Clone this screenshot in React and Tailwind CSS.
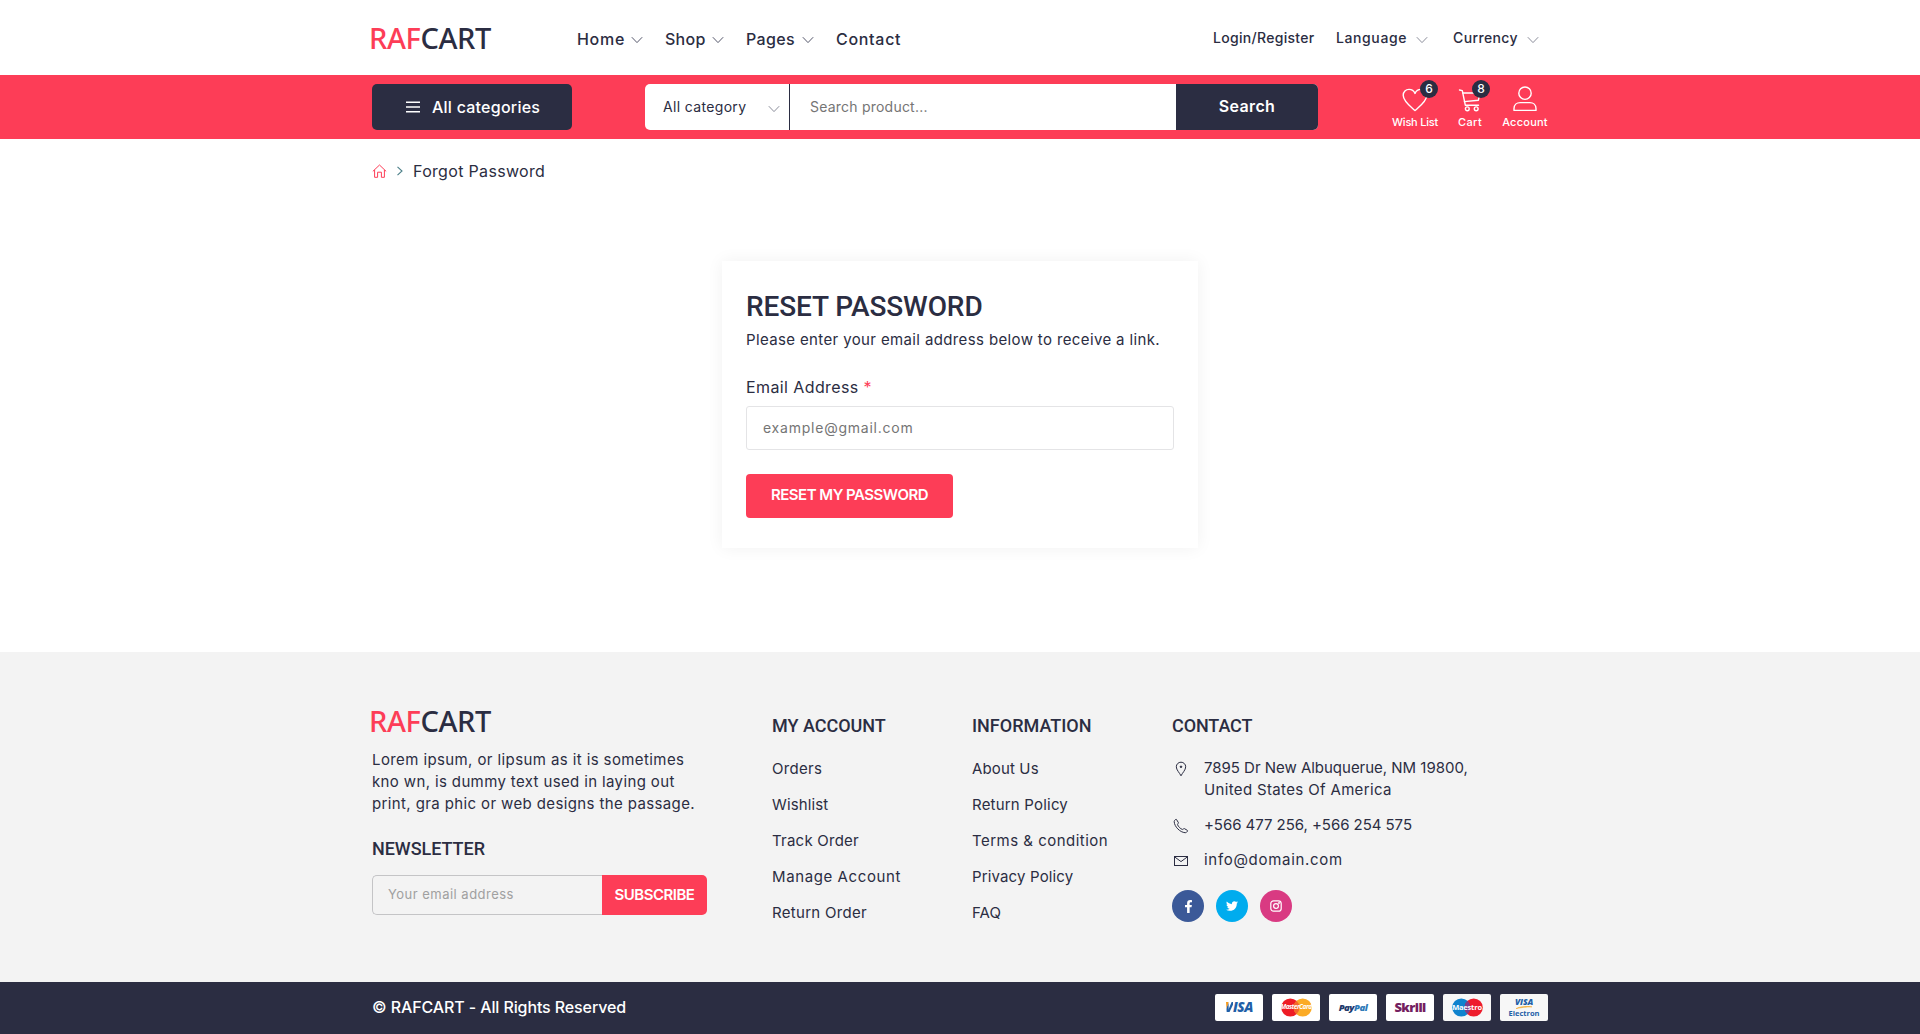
import React from "react";
import { FaFacebookF, FaTwitter } from "react-icons/fa";

function Chevron({ className = "" }) {
  return (
    <svg width="12" height="8" viewBox="0 0 12 8" fill="none" stroke="currentColor" strokeWidth="1" className={className}>
      <path d="M0.8 1.2L6 6.6L11.2 1.2" />
    </svg>
  );
}

function Logo() {
  return (
    <div className="-ml-[3px] h-10 w-[126px] whitespace-nowrap font-['Noto_Sans','Open_Sans',sans-serif] text-[29px] leading-10 font-medium tracking-[-0.4px] text-[#2b2d42]">
      <span className="text-[#fd3d57]">RAF</span>CART
    </div>
  );
}

function HeartIcon() {
  return (
    <svg width="26" height="24" viewBox="0 0 26 24" fill="none" stroke="currentColor" strokeWidth="1.4" strokeLinejoin="round">
      <path d="M13 22.5C9 19 1.2 13.5 1.2 7.3C1.2 3.8 3.8 1.4 7 1.4C9.6 1.4 12 3 13 5.4C14 3 16.4 1.4 19 1.4C22.2 1.4 24.8 3.8 24.8 7.3C24.8 13.5 17 19 13 22.5Z" />
    </svg>
  );
}

function CartIcon() {
  return (
    <svg width="24" height="24" viewBox="0 0 24 24" fill="none" stroke="currentColor" strokeWidth="1.4" strokeLinecap="round" strokeLinejoin="round">
      <path d="M1.5 2L4.3 2.6L7.3 17.2H20.5" />
      <path d="M4.8 5H22L20.4 12.2L6.4 13.6" />
      <circle cx="9.3" cy="20.8" r="1.9" />
      <circle cx="18.2" cy="20.8" r="1.9" />
    </svg>
  );
}

function AccountIcon() {
  return (
    <svg width="24" height="26" viewBox="0 0 24 26" fill="none" stroke="currentColor" strokeWidth="1.4" strokeLinejoin="round">
      <circle cx="12" cy="7.2" r="6.2" />
      <path d="M1 24.4V22.6C1 19 3.6 16.6 7.2 16.6H16.8C20.4 16.6 23 19 23 22.6V24.4Z" />
    </svg>
  );
}

function HomeIcon() {
  return (
    <svg width="15" height="14" viewBox="0 0 15 14" fill="none" stroke="currentColor" strokeWidth="1" strokeLinejoin="round">
      <path d="M0.8 7.4L7.5 1L14.2 7.4" />
      <path d="M2.6 6V13.3H5.6V8.2H9.4V13.3H12.4V6" />
    </svg>
  );
}

function PinIcon() {
  return (
    <svg width="12" height="16" viewBox="0 0 12 16" fill="none" stroke="currentColor" strokeWidth="1">
      <path d="M6 14.8C4.6 11.9 1.3 8.9 1.3 5.8C1.3 3.2 3.4 1.2 6 1.2C8.6 1.2 10.7 3.2 10.7 5.8C10.7 8.9 7.4 11.9 6 14.8Z" />
      <circle cx="6" cy="5.8" r="0.8" fill="currentColor" />
    </svg>
  );
}

function PhoneIcon() {
  return (
    <svg width="16" height="16" viewBox="0 0 16 16" fill="none" stroke="currentColor" strokeWidth="1" strokeLinejoin="round">
      <path d="M3.4 1.4L5.4 4.6C5.7 5.1 4.3 6.1 4.6 6.8C5.5 8.8 7.2 10.5 9.2 11.4C9.9 11.7 10.8 10.3 11.4 10.6L14.4 12.4C15.2 13 13.4 14.8 12.2 14.7C6.8 14.3 1.5 8.6 1.2 3.8C1.1 2.4 2.9 0.9 3.4 1.4Z" />
    </svg>
  );
}

function MailIcon() {
  return (
    <svg width="16" height="12" viewBox="0 0 16 12" fill="none" stroke="currentColor" strokeWidth="1">
      <rect x="1.5" y="1.5" width="13" height="9" />
      <path d="M1.5 1.8L8 6.6L14.5 1.8" />
    </svg>
  );
}

function InstagramIcon() {
  return (
    <svg width="12" height="12" viewBox="0 0 12 12" fill="none" stroke="currentColor" strokeWidth="1.2">
      <rect x="0.8" y="0.8" width="10.4" height="10.4" rx="2.8" />
      <circle cx="6" cy="6" r="2.4" />
      <circle cx="9" cy="3" r="0.4" />
    </svg>
  );
}

const navItems = [
  { label: "Home", box: "w-[54px]", track: "tracking-[0.7px]", caret: true, gap: "mr-[22px]" },
  { label: "Shop", box: "w-[47px]", track: "tracking-[0.25px]", caret: true, gap: "mr-[22px]" },
  { label: "Pages", box: "w-[56px]", track: "tracking-[0.35px]", caret: true, gap: "mr-[22px]" },
  { label: "Contact", box: "w-[66px]", track: "tracking-[0.7px]", caret: false, gap: "" },
];

const accountLinks = [
  ["Orders", "tracking-[0.3px]"],
  ["Wishlist", "tracking-[0.12px]"],
  ["Track Order", "tracking-[0.23px]"],
  ["Manage Account", "tracking-[0.6px]"],
  ["Return Order", "tracking-[0.3px]"],
];

const infoLinks = [
  ["About Us", "tracking-[0.14px]"],
  ["Return Policy", "tracking-[0.2px]"],
  ["Terms & condition", "tracking-[0.48px]"],
  ["Privacy Policy", "tracking-[0.15px]"],
  ["FAQ", "tracking-[0.06px]"],
];

function Header() {
  return (
    <header className="mx-auto flex h-[75px] w-[1176px] items-center">
      <Logo />
      <nav className="ml-[82px] flex pt-[3px] text-base leading-6 font-medium">
        {navItems.map((n) => (
          <a key={n.label} className={`flex items-center whitespace-nowrap ${n.gap}`}>
            <span className={`${n.box} ${n.track}`}>{n.label}</span>
            {n.caret && <Chevron className="mt-px text-[#55576b]" />}
          </a>
        ))}
      </nav>
      <div className="ml-auto flex items-center pt-px pr-[9px] text-sm leading-6 font-medium whitespace-nowrap">
        <span className="w-[123px] tracking-[0.3px]">Login/Register</span>
        <span className="w-[80px] tracking-[0.6px]">Language</span>
        <Chevron className="mt-1 mr-[25px] text-[#8b8d9a]" />
        <span className="w-[74px] tracking-[0.38px]">Currency</span>
        <Chevron className="mt-1 text-[#8b8d9a]" />
      </div>
    </header>
  );
}

function Action({ icon, label, width, track, badge, badgePos }) {
  return (
    <a className={`relative flex h-16 flex-col items-center ${width}`}>
      <div className="mt-[11px] flex h-[26px] items-end">{icon}</div>
      <span className={`mt-0.5 text-[11px] leading-4 font-medium whitespace-nowrap ${track}`}>{label}</span>
      {badge && (
        <span className={`absolute top-[5px] flex size-[18px] items-center justify-center rounded-full bg-[#2b2d42] text-xs leading-none font-medium ${badgePos}`}>
          {badge}
        </span>
      )}
    </a>
  );
}

function SearchBar() {
  return (
    <div className="h-16 bg-[#fd3d57]">
      <div className="mx-auto flex h-full w-[1176px] items-center">
        <button className="flex h-[46px] w-[200px] items-center rounded-[5px] bg-[#2b2d42] pb-px pl-[34px] text-white">
          <svg width="14" height="12" viewBox="0 0 14 12" fill="none" stroke="currentColor" strokeWidth="1.5">
            <path d="M0 1.2H14M0 6H14M0 10.8H14" />
          </svg>
          <span className="ml-3 text-base leading-6 font-medium tracking-[0.24px] whitespace-nowrap">All categories</span>
        </button>
        <div className="ml-[73px] flex h-[46px] w-[673px] overflow-hidden rounded-[5px] bg-white">
          <div className="flex w-[145px] items-center justify-between border-r border-[#2b2d42] pr-[9px] pl-[18px] text-sm whitespace-nowrap">
            <span className="tracking-[0.34px]">All category</span>
            <Chevron className="mt-1 text-[#8b8d9a]" />
          </div>
          <div className="flex flex-1 items-center pl-5 text-sm tracking-[0.22px] text-[#757575]">Search product...</div>
          <button className="w-[142px] bg-[#2b2d42] pb-0.5 text-base font-semibold tracking-[0.35px] text-white">Search</button>
        </div>
        <div className="ml-auto flex gap-5 text-white">
          <Action icon={<HeartIcon />} label="Wish List" width="w-[46px]" track="tracking-[-0.22px]" badge="6" badgePos="left-[28px]" />
          <Action icon={<CartIcon />} label="Cart" width="w-6" track="tracking-[0.38px]" badge="8" badgePos="left-[14px]" />
          <Action icon={<AccountIcon />} label="Account" width="w-[46px]" track="tracking-[0.24px]" />
        </div>
      </div>
    </div>
  );
}

function ResetCard() {
  return (
    <section className="mx-auto mt-[78px] h-[287px] w-[476px] bg-white px-6 pt-[29px] shadow-[0_0_16px_rgba(0,0,0,0.06)]">
      <h1 className="font-[Roboto,sans-serif] text-[28px] leading-[34px] font-medium tracking-[-0.1px]">RESET PASSWORD</h1>
      <p className="mt-1 text-[15px] leading-6 tracking-[0.37px] whitespace-nowrap">
        Please enter your email address below to receive a link.
      </p>
      <div className="mt-[23px] text-base leading-6 tracking-[0.4px]">
        Email Address <span className="text-[#fd3d57]">*</span>
      </div>
      <div className="mt-[7px] flex h-11 items-center rounded-[3px] border border-[#e4e4e6] pl-4 text-sm tracking-[0.77px] text-[#757575]">
        example@gmail.com
      </div>
      <button className="mt-6 block h-11 w-[207px] rounded-[4px] bg-[#fd3d57] pb-px text-[15px] font-semibold tracking-[-0.5px] whitespace-nowrap text-white">
        RESET MY PASSWORD
      </button>
    </section>
  );
}

function LinkColumn({ title, links, titleTrack }) {
  return (
    <div className="w-[200px] pt-[13px]">
      <h2 className={`font-[Roboto,sans-serif] text-lg leading-6 font-medium ${titleTrack}`}>{title}</h2>
      <ul className="mt-[13px] text-[15px] leading-9">
        {links.map(([label, track]) => (
          <li key={label} className={track}>{label}</li>
        ))}
      </ul>
    </div>
  );
}

function Footer() {
  return (
    <footer className="h-[330px] bg-[#f3f3f3] pt-[49px]">
      <div className="mx-auto flex w-[1176px] whitespace-nowrap">
        <div className="w-[400px]">
          <Logo />
          <p className="mt-2 text-[15px] leading-[22px]">
            <span className="block tracking-[0.4px]">Lorem ipsum, or lipsum as it is sometimes</span>
            <span className="block tracking-[0.37px]">kno wn, is dummy text used in laying out</span>
            <span className="block tracking-[0.38px]">print, gra phic or web designs the passage.</span>
          </p>
          <h2 className="mt-[22px] font-[Roboto,sans-serif] text-lg leading-6 font-medium tracking-[-0.04px]">NEWSLETTER</h2>
          <div className="mt-[14px] flex h-10 w-[335px]">
            <div className="flex w-[230px] items-center rounded-l-[5px] border border-r-0 border-[#c4c4c6] pl-[15px] text-[13px] tracking-[0.48px] text-[#a0a0a0]">
              Your email address
            </div>
            <button className="w-[105px] rounded-r-[5px] bg-[#fd3d57] text-[15px] font-semibold tracking-[-0.5px] text-white">SUBSCRIBE</button>
          </div>
        </div>
        <LinkColumn title="MY ACCOUNT" titleTrack="tracking-[-0.02px]" links={accountLinks} />
        <LinkColumn title="INFORMATION" titleTrack="tracking-[0px]" links={infoLinks} />
        <div className="pt-[13px] text-[15px] leading-[22px]">
          <h2 className="font-[Roboto,sans-serif] text-lg leading-6 font-medium tracking-[-0.1px]">CONTACT</h2>
          <div className="mt-[19px] flex">
            <div className="w-8 pt-1 pl-[3px]"><PinIcon /></div>
            <p>
              <span className="block tracking-[-0.02px]">7895 Dr New Albuquerue, NM 19800,</span>
              <span className="block tracking-[0.35px]">United States Of America</span>
            </p>
          </div>
          <div className="mt-[13px] flex">
            <div className="w-8 pt-1 pl-px"><PhoneIcon /></div>
            <p className="tracking-[-0.05px]">+566 477 256, +566 254 575</p>
          </div>
          <div className="mt-[13px] flex">
            <div className="w-8 pt-1.5 pl-px"><MailIcon /></div>
            <p className="tracking-[0.7px]">info@domain.com</p>
          </div>
          <div className="mt-[19px] flex gap-3 text-white">
            <a className="flex size-8 items-center justify-center rounded-full bg-[#3b5998]"><FaFacebookF size={13} /></a>
            <a className="flex size-8 items-center justify-center rounded-full bg-[#00acee]"><FaTwitter size={12} /></a>
            <a className="flex size-8 items-center justify-center rounded-full bg-[#d93a82]"><InstagramIcon /></a>
          </div>
        </div>
      </div>
    </footer>
  );
}

function PayCard({ children, tint = "bg-white" }) {
  return <div className={`relative flex h-[27px] w-12 flex-col items-center justify-center overflow-hidden rounded-[2px] ${tint}`}>{children}</div>;
}

function TwoDiscs({ left, right, mix, label, labelClass }) {
  return (
    <>
      <svg width="31" height="19" viewBox="0 0 30 18">
        <circle cx="9" cy="9" r="8.8" fill={left} />
        <circle cx="21" cy="9" r="8.8" fill={right} />
        <path d="M15 2.5A8.8 8.8 0 0 1 15 15.5A8.8 8.8 0 0 1 15 2.5Z" fill={mix} />
      </svg>
      <span className={`absolute inset-0 flex items-center justify-center font-bold text-white ${labelClass}`}>{label}</span>
    </>
  );
}

function BottomBar() {
  return (
    <div className="h-[52px] bg-[#2b2d42]">
      <div className="mx-auto flex h-full w-[1176px] items-center justify-between pb-px">
        <p className="pb-px text-base leading-6 font-medium tracking-[-0.11px] text-white">© RAFCART - All Rights Reserved</p>
        <div className="flex gap-[9px] font-['Open_Sans',sans-serif] leading-none">
          <PayCard>
            <span className="text-[13.5px] font-extrabold tracking-[-0.4px] text-[#1f5fa8] italic">
              <span className="bg-linear-to-br from-[#f39a1f] from-35% to-[#1f5fa8] to-40% bg-clip-text text-transparent">V</span>ISA
            </span>
          </PayCard>
          <PayCard>
            <TwoDiscs left="#ee1c25" right="#fbab26" mix="#f4662a" label="MasterCard" labelClass="text-[6.5px] tracking-[-0.5px] italic" />
          </PayCard>
          <PayCard>
            <span className="text-[9.5px] font-extrabold tracking-[-0.5px] text-[#21386b] italic">
              Pay<span className="text-[#2f7ab8]">Pal</span>
            </span>
          </PayCard>
          <PayCard>
            <span className="text-[13px] font-extrabold tracking-[-0.6px] text-[#74205f]">Skrill</span>
          </PayCard>
          <PayCard tint="bg-[#f7f7f7]">
            <TwoDiscs left="#0f83ce" right="#ee1c2c" mix="#7a3f8c" label="Maestro" labelClass="text-[7.5px] tracking-[-0.2px]" />
          </PayCard>
          <PayCard tint="bg-[#f7f7f7]">
            <span className="text-[8.5px] leading-[9px] font-extrabold tracking-[-0.1px] text-[#1f5fa8] italic">VISA</span>
            <svg width="16" height="3" viewBox="0 0 16 3">
              <path d="M0 2.6C4 0.4 10 0 16 0.8C10 0.9 5 1.6 0 2.6Z" fill="#f6a623" stroke="#f6a623" strokeWidth="0.5" />
            </svg>
            <span className="text-[7.5px] leading-[9px] font-bold text-[#1f5fa8]">Electron</span>
          </PayCard>
        </div>
      </div>
    </div>
  );
}

export default function App() {
  return (
    <div className="flex h-[1034px] w-[1920px] flex-col overflow-hidden bg-white font-[Inter,sans-serif] text-[#2b2d42]">
      <Header />
      <SearchBar />
      <main className="h-[513px]">
        <div className="mx-auto flex h-11 w-[1176px] items-end">
          <div className="flex h-6 items-center">
            <span className="text-[#fd3d57]"><HomeIcon /></span>
            <svg width="8" height="10" viewBox="0 0 8 10" fill="none" stroke="#4b7f88" strokeWidth="1.1" className="ml-[9px]">
              <path d="M1.5 0.8L6 5L1.5 9.2" />
            </svg>
            <span className="ml-[9px] text-base leading-6 tracking-[0.32px]">Forgot Password</span>
          </div>
        </div>
        <ResetCard />
      </main>
      <Footer />
      <BottomBar />
    </div>
  );
}
